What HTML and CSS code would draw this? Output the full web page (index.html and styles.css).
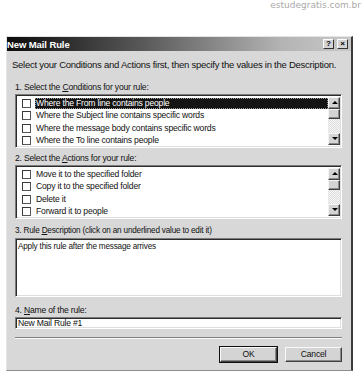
FILE: index.html
```html
<!DOCTYPE html>
<html>
<head>
<meta charset="utf-8">
<link rel="stylesheet" href="styles.css">
</head>
<body>
<div class="watermark">estudegratis.com.br</div>
<div class="window">
  <div class="titlebar">
    <span class="title">New Mail Rule</span>
    <div class="tbtns"><span class="tbtn">?</span><span class="tbtn x">×</span></div>
  </div>
  <div class="content">
    <div class="intro">Select your Conditions and Actions first, then specify the values in the Description.</div>
    <div class="label l1">1. Select the <u>C</u>onditions for your rule:</div>
    <div class="listbox">
      <div class="rows">
        <div class="row sel"><span class="cb"></span><span class="txt">Where the From line contains people</span></div>
        <div class="row"><span class="cb"></span><span class="txt">Where the Subject line contains specific words</span></div>
        <div class="row"><span class="cb"></span><span class="txt">Where the message body contains specific words</span></div>
        <div class="row"><span class="cb"></span><span class="txt">Where the To line contains people</span></div>
      </div>
      <div class="sbar"><span class="sbtn up"></span><span class="thumb"></span><span class="track"></span><span class="sbtn down"></span></div>
    </div>
    <div class="label l2">2. Select the <u>A</u>ctions for your rule:</div>
    <div class="listbox">
      <div class="rows">
        <div class="row"><span class="cb"></span><span class="txt">Move it to the specified folder</span></div>
        <div class="row"><span class="cb"></span><span class="txt">Copy it to the specified folder</span></div>
        <div class="row"><span class="cb"></span><span class="txt">Delete it</span></div>
        <div class="row"><span class="cb"></span><span class="txt">Forward it to people</span></div>
      </div>
      <div class="sbar"><span class="sbtn up"></span><span class="thumb"></span><span class="track"></span><span class="sbtn down"></span></div>
    </div>
    <div class="label l3">3. Rule <u>D</u>escription (click on an underlined value to edit it)</div>
    <div class="descbox">Apply this rule after the message arrives</div>
    <div class="label l4">4. <u>N</u>ame of the rule:</div>
    <div class="namebox">New Mail Rule #1</div>
    <div class="sep"></div>
    <div class="buttons">
      <span class="btn default">OK</span>
      <span class="btn">Cancel</span>
    </div>
  </div>
</div>
</body>
</html>
```
FILE: styles.css
```css
body {
  margin: 0;
  background: #ffffff;
  font-family: "Liberation Sans", Arial, sans-serif;
  font-size: 8.6px;
  color: #111;
}
.watermark {
  height: 36px;
  text-align: right;
  padding-right: 3px;
  font-family: "DejaVu Sans", sans-serif;
  font-size: 9px;
  line-height: 11px;
  color: #a9a9a9;
}
.window {
  margin-left: 6px;
  width: 344px;
  background: #d8d8d8;
  border-top: 1px solid #e4e4e4;
  border-left: 1px solid #e4e4e4;
  border-right: 2px solid #3c3c3c;
  border-bottom: 1px solid #8c8c8c;
}
.titlebar {
  height: 14px;
  display: flex;
  align-items: center;
  justify-content: space-between;
  background: linear-gradient(to right, #0c0c0c 0%, #5a5a5a 40%, #b4b4b4 80%, #c8c8c8 100%);
}
.title {
  color: #fff;
  font-weight: bold;
  font-size: 9.5px;
  letter-spacing: -0.1px;
}
.tbtns {
  display: flex;
  gap: 3px;
  padding-right: 3px;
}
.tbtn {
  width: 9px;
  height: 8px;
  background: #d4d4d4;
  border-top: 1px solid #fff;
  border-left: 1px solid #fff;
  border-right: 1px solid #333;
  border-bottom: 1px solid #333;
  font-size: 8px;
  font-weight: bold;
  line-height: 8px;
  text-align: center;
  color: #000;
}
.content {
  padding: 0 9px 8px 8px;
}
.intro {
  margin: 8px 0 0 -3px;
  font-size: 9.5px;
  line-height: 12px;
  letter-spacing: -0.25px;
  white-space: nowrap;
}
.label {
  line-height: 12px;
  letter-spacing: -0.2px;
  white-space: nowrap;
}
.l1 { margin-top: 10px; }
.l2 { margin-top: 4px; }
.l3 { margin-top: 6px; font-size: 8.2px; }
.l4 { margin-top: 7px; }
.listbox, .descbox, .namebox {
  background: #fff;
  border-top: 1px solid #7c7c7c;
  border-left: 1px solid #7c7c7c;
  border-right: 1px solid #fff;
  border-bottom: 1px solid #fff;
  box-shadow: inset 1px 1px 0 #2c2c2c, inset -1px -1px 0 #dedede;
}
.listbox {
  margin-top: 1px;
  height: 54px;
  box-sizing: border-box;
  padding: 2px 1px 2px 2px;
  display: flex;
}
.rows {
  flex: 1;
  min-width: 0;
}
.row {
  height: 12.5px;
  display: flex;
  align-items: center;
  white-space: nowrap;
  letter-spacing: -0.2px;
}
.cb {
  width: 7px;
  height: 7px;
  margin-left: 4px;
  margin-right: 4px;
  flex: none;
  border-top: 1px solid #3a3a3a;
  border-left: 1px solid #3a3a3a;
  border-right: 1px solid #555;
  border-bottom: 1px solid #555;
  background: #fff;
}
.txt {
  line-height: 11px;
  padding: 0 2px 0 1px;
}
.row.sel .txt {
  flex: 1;
  background: #141414;
  color: #fff;
  outline: 1px dotted #9a9a9a;
  outline-offset: -1px;
}
.sbar {
  width: 12px;
  flex: none;
  display: flex;
  flex-direction: column;
}
.sbtn, .thumb {
  height: 10px;
  background: #d4d4d4;
  border-top: 1px solid #f4f4f4;
  border-left: 1px solid #f4f4f4;
  border-right: 1px solid #404040;
  border-bottom: 1px solid #404040;
  box-shadow: inset -1px -1px 0 #8a8a8a;
  position: relative;
}
.thumb { height: 8px; }
.track {
  flex: 1;
  background-color: #f2f2f2;
  background-image: repeating-conic-gradient(#dcdcdc 0 25%, #f8f8f8 0 50%);
  background-size: 2px 2px;
}
.sbtn::after {
  content: "";
  position: absolute;
  left: 3px;
  top: 3px;
  border-left: 3px solid transparent;
  border-right: 3px solid transparent;
}
.sbtn.up::after { border-bottom: 3px solid #000; }
.sbtn.down::after { border-top: 3px solid #000; }
.descbox {
  margin-top: 1px;
  height: 59px;
  box-sizing: border-box;
  padding: 2px 2px;
  font-size: 8.2px;
  line-height: 11px;
  letter-spacing: -0.2px;
}
.namebox {
  margin-top: 1px;
  height: 12px;
  box-sizing: border-box;
  padding: 0 2px;
  line-height: 10px;
  letter-spacing: -0.2px;
}
.sep {
  margin-top: 8px;
  height: 0;
  border-top: 1px solid #808080;
  border-bottom: 1px solid #fafafa;
}
.buttons {
  margin-top: 8px;
  display: flex;
  justify-content: flex-end;
  gap: 8px;
}
.btn {
  width: 55px;
  height: 13px;
  line-height: 13px;
  text-align: center;
  background: #d4d4d4;
  border-top: 1px solid #fafafa;
  border-left: 1px solid #fafafa;
  border-right: 1px solid #404040;
  border-bottom: 1px solid #404040;
  box-shadow: inset -1px -1px 0 #888;
  letter-spacing: -0.2px;
}
.btn.default {
  outline: 1px solid #111;
}
```
